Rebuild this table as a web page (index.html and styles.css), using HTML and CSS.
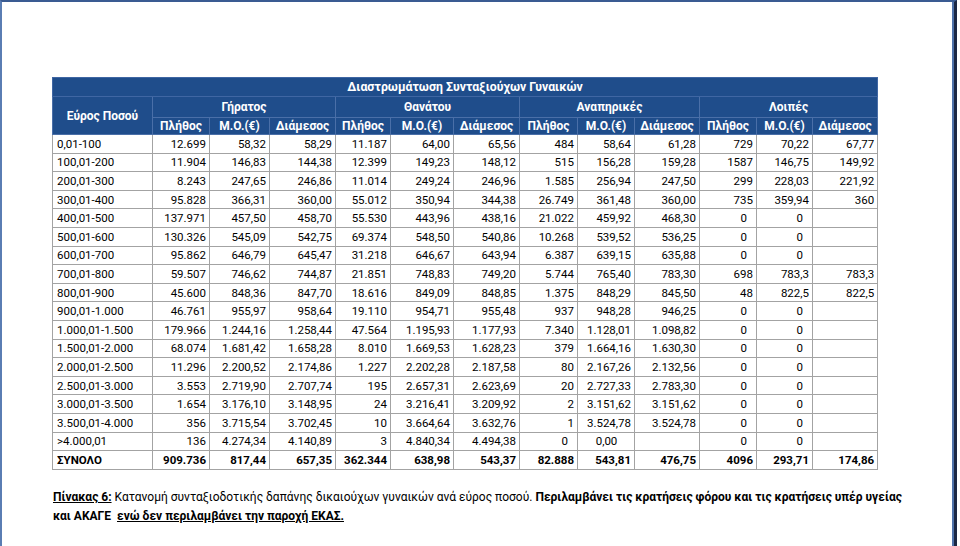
FILE: index.html
```html
<!DOCTYPE html>
<html lang="el">
<head>
<meta charset="utf-8">
<title>Διαστρωμάτωση Συνταξιούχων Γυναικών</title>
<link rel="stylesheet" href="styles.css">
</head>
<body>
<div class="frame">
  <div class="inner">
    <table class="stats">
      <colgroup>
        <col class="w-range">
        <col class="w1"><col class="w2"><col class="w3">
        <col class="w4"><col class="w5"><col class="w6">
        <col class="w7"><col class="w8"><col class="w9">
        <col class="w10"><col class="w11"><col class="w12">
      </colgroup>
      <thead>
        <tr class="row-title"><th colspan="13">Διαστρωμάτωση Συνταξιούχων Γυναικών</th></tr>
        <tr class="row-group">
          <th rowspan="2" class="range-head">Εύρος Ποσού</th>
          <th colspan="3">Γήρατος</th>
          <th colspan="3">Θανάτου</th>
          <th colspan="3">Αναπηρικές</th>
          <th colspan="3">Λοιπές</th>
        </tr>
        <tr class="row-sub">
          <th>Πλήθος</th><th>Μ.Ο.(€)</th><th>Διάμεσος</th>
          <th>Πλήθος</th><th>Μ.Ο.(€)</th><th>Διάμεσος</th>
          <th>Πλήθος</th><th>Μ.Ο.(€)</th><th>Διάμεσος</th>
          <th>Πλήθος</th><th>Μ.Ο.(€)</th><th>Διάμεσος</th>
        </tr>
      </thead>
      <tbody>
        <tr><td>0,01-100</td><td>12.699</td><td>58,32</td><td>58,29</td><td>11.187</td><td>64,00</td><td>65,56</td><td>484</td><td>58,64</td><td>61,28</td><td>729</td><td>70,22</td><td>67,77</td></tr>
        <tr><td>100,01-200</td><td>11.904</td><td>146,83</td><td>144,38</td><td>12.399</td><td>149,23</td><td>148,12</td><td>515</td><td>156,28</td><td>159,28</td><td>1587</td><td>146,75</td><td>149,92</td></tr>
        <tr><td>200,01-300</td><td>8.243</td><td>247,65</td><td>246,86</td><td>11.014</td><td>249,24</td><td>246,96</td><td>1.585</td><td>256,94</td><td>247,50</td><td>299</td><td>228,03</td><td>221,92</td></tr>
        <tr><td>300,01-400</td><td>95.828</td><td>366,31</td><td>360,00</td><td>55.012</td><td>350,94</td><td>344,38</td><td>26.749</td><td>361,48</td><td>360,00</td><td>735</td><td>359,94</td><td>360</td></tr>
        <tr><td>400,01-500</td><td>137.971</td><td>457,50</td><td>458,70</td><td>55.530</td><td>443,96</td><td>438,16</td><td>21.022</td><td>459,92</td><td>468,30</td><td class="z">0</td><td class="z">0</td><td></td></tr>
        <tr><td>500,01-600</td><td>130.326</td><td>545,09</td><td>542,75</td><td>69.374</td><td>548,50</td><td>540,86</td><td>10.268</td><td>539,52</td><td>536,25</td><td class="z">0</td><td class="z">0</td><td></td></tr>
        <tr><td>600,01-700</td><td>95.862</td><td>646,79</td><td>645,47</td><td>31.218</td><td>646,67</td><td>643,94</td><td>6.387</td><td>639,15</td><td>635,88</td><td class="z">0</td><td class="z">0</td><td></td></tr>
        <tr><td>700,01-800</td><td>59.507</td><td>746,62</td><td>744,87</td><td>21.851</td><td>748,83</td><td>749,20</td><td>5.744</td><td>765,40</td><td>783,30</td><td>698</td><td>783,3</td><td>783,3</td></tr>
        <tr><td>800,01-900</td><td>45.600</td><td>848,36</td><td>847,70</td><td>18.616</td><td>849,09</td><td>848,85</td><td>1.375</td><td>848,29</td><td>845,50</td><td>48</td><td>822,5</td><td>822,5</td></tr>
        <tr><td>900,01-1.000</td><td>46.761</td><td>955,97</td><td>958,64</td><td>19.110</td><td>954,71</td><td>955,48</td><td>937</td><td>948,28</td><td>946,25</td><td class="z">0</td><td class="z">0</td><td></td></tr>
        <tr><td>1.000,01-1.500</td><td>179.966</td><td>1.244,16</td><td>1.258,44</td><td>47.564</td><td>1.195,93</td><td>1.177,93</td><td>7.340</td><td>1.128,01</td><td>1.098,82</td><td class="z">0</td><td class="z">0</td><td></td></tr>
        <tr><td>1.500,01-2.000</td><td>68.074</td><td>1.681,42</td><td>1.658,28</td><td>8.010</td><td>1.669,53</td><td>1.628,23</td><td>379</td><td>1.664,16</td><td>1.630,30</td><td class="z">0</td><td class="z">0</td><td></td></tr>
        <tr><td>2.000,01-2.500</td><td>11.296</td><td>2.200,52</td><td>2.174,86</td><td>1.227</td><td>2.202,28</td><td>2.187,58</td><td>80</td><td>2.167,26</td><td>2.132,56</td><td class="z">0</td><td class="z">0</td><td></td></tr>
        <tr><td>2.500,01-3.000</td><td>3.553</td><td>2.719,90</td><td>2.707,74</td><td>195</td><td>2.657,31</td><td>2.623,69</td><td>20</td><td>2.727,33</td><td>2.783,30</td><td class="z">0</td><td class="z">0</td><td></td></tr>
        <tr><td>3.000,01-3.500</td><td>1.654</td><td>3.176,10</td><td>3.148,95</td><td>24</td><td>3.216,41</td><td>3.209,92</td><td>2</td><td>3.151,62</td><td>3.151,62</td><td class="z">0</td><td class="z">0</td><td></td></tr>
        <tr><td>3.500,01-4.000</td><td>356</td><td>3.715,54</td><td>3.702,45</td><td>10</td><td>3.664,64</td><td>3.632,76</td><td>1</td><td>3.524,78</td><td>3.524,78</td><td class="z">0</td><td class="z">0</td><td></td></tr>
        <tr><td>&gt;4.000,01</td><td>136</td><td>4.274,34</td><td>4.140,89</td><td>3</td><td>4.840,34</td><td>4.494,38</td><td class="z">0</td><td class="c">0,00</td><td></td><td class="z">0</td><td class="z">0</td><td></td></tr>
        <tr class="total"><td>ΣΥΝΟΛΟ</td><td>909.736</td><td>817,44</td><td>657,35</td><td>362.344</td><td>638,98</td><td>543,37</td><td>82.888</td><td>543,81</td><td>476,75</td><td>4096</td><td>293,71</td><td>174,86</td></tr>
      </tbody>
    </table>
    <p class="caption"><b class="u">Πίνακας 6:</b> Κατανομή συνταξιοδοτικής δαπάνης δικαιούχων γυναικών ανά εύρος ποσού. <b>Περιλαμβάνει τις κρατήσεις φόρου και τις κρατήσεις υπέρ υγείας</b><br><b>και ΑΚΑΓΕ</b>&nbsp; <b class="u">ενώ δεν περιλαμβάνει την παροχή ΕΚΑΣ.</b></p>
  </div>
</div>
</body>
</html>
```

FILE: styles.css
```css
html, body {
  margin: 0;
  padding: 0;
  background: #ffffff;
}

body {
  width: 960px;
  height: 546px;
  overflow: hidden;
  font-family: Roboto, "Noto Sans", sans-serif;
  color: #000;
}

.frame {
  width: 952px;
  height: 560px;
  border-top: 2px solid #3a5b92;
  border-left: 2px solid #5a7db3;
  border-right: 3px solid #1b2744;
}

.inner {
  height: 100%;
  border-right: 2px solid #4f72aa;
  padding: 75px 0 0 50px;
  box-sizing: border-box;
}

.stats {
  border-collapse: collapse;
  table-layout: fixed;
  width: 825px;
  font-size: 11.5px;
}

.w-range { width: 100px; }
.w1 { width: 57px; }
.w2 { width: 60px; }
.w3 { width: 66px; }
.w4 { width: 55px; }
.w5 { width: 63px; }
.w6 { width: 66px; }
.w7 { width: 58px; }
.w8 { width: 57px; }
.w9 { width: 65px; }
.w10 { width: 57px; }
.w11 { width: 56px; }
.w12 { width: 65px; }

.stats th {
  background: #1f4d8b;
  color: #ffffff;
  font-weight: 700;
  font-size: 12px;
  border: 1px solid #4a6fa8;
  padding: 0 2px;
  white-space: nowrap;
  text-align: center;
}

.row-title th {
  height: 18px;
  font-size: 12.3px;
  border-color: #3f66a3;
}
.row-group th { height: 20px; }
.row-sub th { height: 16px; }
.range-head { font-size: 12.3px; }

.stats td {
  border: 1px solid #a3a3a3;
  height: 17.6px;
  padding: 0 3px 0 4px;
  text-align: right;
  white-space: nowrap;
}

.stats td:first-child { text-align: left; }
.stats td.z { padding-right: 9px; }
.stats td.c { text-align: center; }

.total td { font-weight: 700; }

.caption {
  margin: 18px 0 0 1px;
  font-size: 12px;
  line-height: 19px;
  white-space: nowrap;
}

.u { text-decoration: underline; }
```
